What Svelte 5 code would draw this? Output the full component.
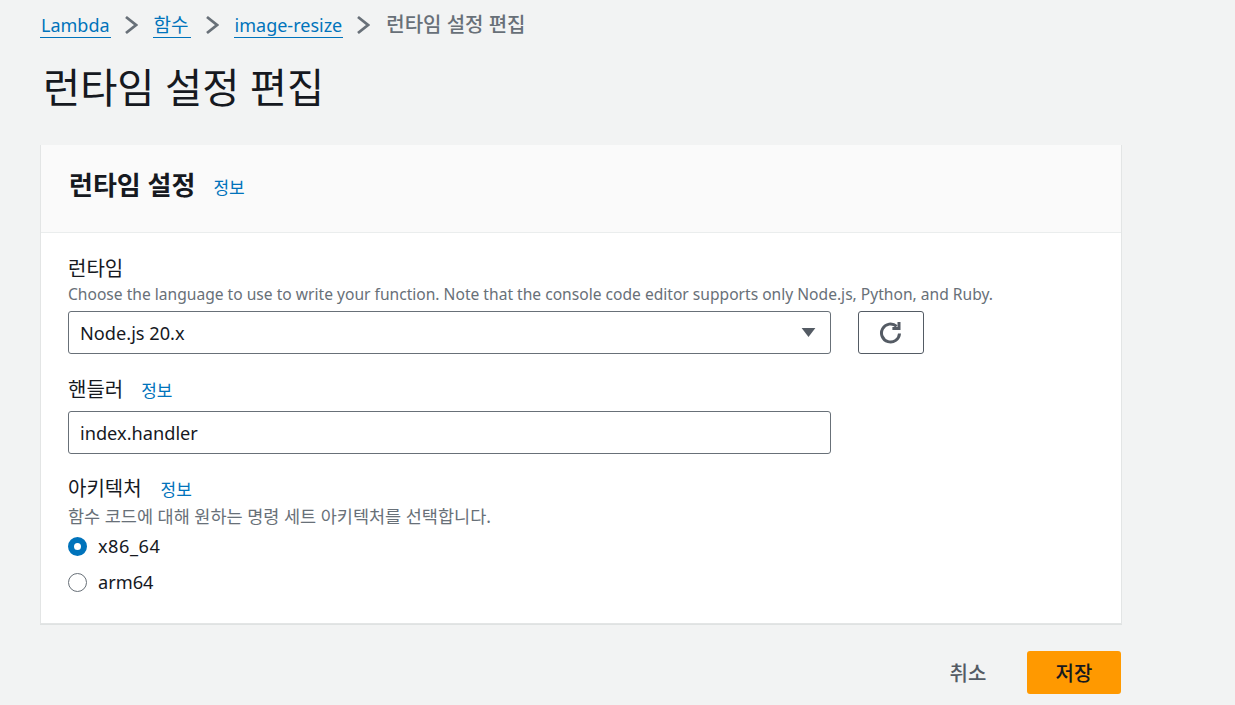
<script>
  let runtime = 'Node.js 20.x';
  let handler = 'index.handler';
  let arch = 'x86_64';
</script>

<div class="page">
  <nav class="crumbs">
    <a href="#a">Lambda</a>
    <svg class="chev" viewBox="0 0 14 20"><path d="M2 2 L12 10 L2 18" /></svg>
    <a class="ko" href="#b">함수</a>
    <svg class="chev" viewBox="0 0 14 20"><path d="M2 2 L12 10 L2 18" /></svg>
    <a href="#c">image-resize</a>
    <svg class="chev" viewBox="0 0 14 20"><path d="M2 2 L12 10 L2 18" /></svg>
    <span class="current">런타임 설정 편집</span>
  </nav>

  <h1>런타임 설정 편집</h1>

  <section class="card">
    <header class="card-head">
      <h2>런타임 설정</h2>
      <a class="info" href="#i">정보</a>
    </header>
    <div class="card-body">
      <div class="field first">
        <div class="label">런타임</div>
        <div class="desc">Choose the language to use to write your function. Note that the console code editor supports only Node.js, Python, and Ruby.</div>
        <div class="select-row">
          <div class="control select">
            <span>{runtime}</span>
            <svg class="caret" viewBox="0 0 16 12"><path d="M0.5 1 H15.5 L8 11 Z" /></svg>
          </div>
          <button class="refresh" aria-label="새로 고침">
            <svg viewBox="0 0 24 24"><path d="M20.5 12.5 A9 9 0 1 1 17.6 5.4" /><path d="M20 1 V7.6 H13.4" /></svg>
          </button>
        </div>
      </div>

      <div class="field handler">
        <div class="label-row"><span class="label">핸들러</span><a class="info" href="#h">정보</a></div>
        <input class="control" bind:value={handler} />
      </div>

      <div class="field arch">
        <div class="label-row"><span class="label">아키텍처</span><a class="info" href="#r">정보</a></div>
        <div class="desc ko">함수 코드에 대해 원하는 명령 세트 아키텍처를 선택합니다.</div>
        <label class="radio"><input type="radio" bind:group={arch} value="x86_64" /><span class="wide">x86_64</span></label>
        <label class="radio"><input type="radio" bind:group={arch} value="arm64" /><span>arm64</span></label>
      </div>
    </div>
  </section>

  <footer class="actions">
    <button class="cancel">취소</button>
    <button class="save">저장</button>
  </footer>
</div>

<style>
  :global(body) {
    margin: 0;
    background: #f2f3f3;
    font-family: "Noto Sans", "Noto Sans CJK KR", sans-serif;
    color: #16191f;
  }
  .page {
    width: 1082px;
    height: 705px;
    overflow: hidden;
    padding: 0 0 0 40px;
    box-sizing: content-box;
  }
  .crumbs {
    display: flex;
    align-items: center;
    height: 26px;
    margin-top: 12px;
    font-size: 18px;
    line-height: 26px;
  }
  .crumbs a {
    color: #0073bb;
    text-decoration: none;
    border-bottom: 1px solid #0073bb;
    padding: 0 1px;
    line-height: 24px;
  }
  .crumbs a.ko {
    font-size: 19px;
    padding-right: 2px;
    margin-right: 1px;
  }
  .chev {
    width: 14px;
    height: 20px;
    margin: 0 15px 0 13px;
    flex: none;
  }
  .chev path {
    fill: none;
    stroke: #687078;
    stroke-width: 2.8;
  }
  .current {
    color: #687078;
    font-weight: 500;
    font-size: 20px;
    margin-left: 1px;
  }
  h1 {
    margin: 22px 0 0 3px;
    font-size: 40.4px;
    line-height: 56px;
    font-weight: 400;
    height: 56px;
  }
  .card {
    margin-top: 29px;
    background: #fff;
    border: 1px solid #e3e5e5;
    border-top: none;
    box-shadow: 0 1px 0 0 #dfe2e2;
    width: 1082px;
    box-sizing: border-box;
  }
  .card-head {
    display: flex;
    align-items: center;
    height: 88px;
    background: #fafafa;
    border-bottom: 1px solid #eaeded;
    padding: 0 0 0 28px;
    box-sizing: border-box;
  }
  .card-head h2 {
    margin: 0 18px 0 0;
    font-size: 26px;
    line-height: 30px;
    font-weight: 700;
    position: relative;
    top: -4px;
  }
  .info {
    color: #0073bb;
    text-decoration: none;
    font-size: 17px;
    line-height: 20px;
    font-weight: 400;
    position: relative;
    top: 1px;
  }
  .card-head .info { top: -1px; }
  .card-body {
    padding: 0 27px;
    height: 390px;
    box-sizing: border-box;
  }
  .field.first { padding-top: 23px; }
  .label {
    display: block;
    font-size: 20px;
    line-height: 26px;
    color: #16191f;
  }
  .label-row {
    display: flex;
    align-items: center;
    gap: 18px;
    height: 26px;
  }
  .arch .label-row { gap: 19px; }
  .desc {
    font-size: 15.6px;
    line-height: 20px;
    color: #687078;
    white-space: nowrap;
    margin-top: 2px;
  }
  .desc.ko {
    font-size: 17.5px;
    margin-top: 4px;
  }
  .select-row {
    display: flex;
    gap: 27px;
    margin-top: 7px;
  }
  .control {
    display: block;
    box-sizing: border-box;
    width: 763px;
    height: 43px;
    border: 1px solid #687078;
    border-radius: 3px;
    background: #fff;
    padding: 0 11px;
    font: inherit;
    font-size: 18.2px;
    color: #16191f;
    outline: none;
  }
  .select {
    display: flex;
    align-items: center;
    justify-content: space-between;
  }
  .caret {
    width: 15px;
    height: 11px;
    margin-right: 3px;
  }
  .caret path { fill: #545b64; }
  .refresh {
    width: 66px;
    height: 43px;
    background: #fff;
    border: 1px solid #545b64;
    border-radius: 3px;
    display: flex;
    align-items: center;
    justify-content: center;
    padding: 0;
  }
  .refresh svg {
    width: 24px;
    height: 24px;
    fill: none;
    stroke: #545b64;
    stroke-width: 3;
  }
  .field.handler { margin-top: 23px; }
  .field.handler input { margin-top: 8px; }
  .field.arch { margin-top: 22px; }
  .radio {
    display: flex;
    align-items: center;
    gap: 11px;
    height: 26px;
    font-size: 18.2px;
    margin-top: 10px;
  }
  .wide { letter-spacing: 0.5px; }
  .desc + .radio { margin-top: 7px; }
  .radio input {
    appearance: none;
    width: 19px;
    height: 19px;
    margin: 0;
    border-radius: 50%;
    border: 1.5px solid #687078;
    background: #fff;
    box-sizing: border-box;
    flex: none;
  }
  .radio input:checked {
    border: 6px solid #0073bb;
  }
  .actions {
    display: flex;
    justify-content: flex-end;
    align-items: center;
    width: 1081px;
    margin-top: 27px;
    gap: 15px;
  }
  .actions button {
    font: inherit;
    font-size: 20px;
    font-weight: 500;
    height: 43px;
    border: none;
    border-radius: 3px;
    padding: 0;
  }
  .cancel {
    width: 88px;
    background: transparent;
    color: #545b64;
  }
  .save {
    width: 94px;
    background: #ff9900;
    color: #16191f;
  }
</style>
